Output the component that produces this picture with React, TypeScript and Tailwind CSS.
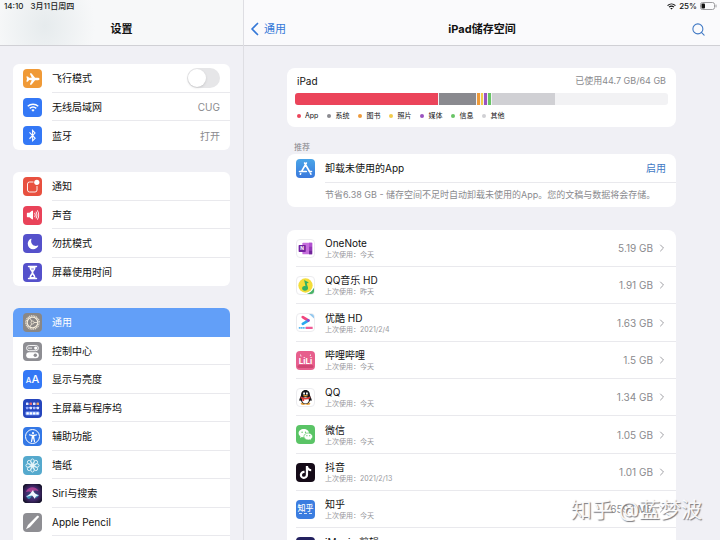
import React from 'react';
import { ChevronRight, Search } from 'lucide-react';
import { FaBluetoothB, FaTiktok } from 'react-icons/fa';
import { IoAccessibility, IoAirplane, IoMoon, IoVolumeHigh } from 'react-icons/io5';

const WifiGlyph = ({ className }: { className: string }) => (
  <svg viewBox="0 0 16 12" className={className} fill="none" stroke="currentColor" strokeWidth="1.900">
    <path d="M1 4.400C5 0.700 11 0.700 15 4.400" />
    <path d="M3.600 7.200C6.200 4.900 9.800 4.900 12.400 7.200" />
    <path d="M8 11.500L5.800 9.300C7 8.200 9 8.200 10.200 9.300Z" fill="currentColor" stroke="none" />
  </svg>
);

const NotificationGlyph = () => (
  <svg viewBox="0 0 19 19" className="size-full" fill="none">
    <path d="M10.500 5H6.500Q4.500 5 4.500 7V13Q4.500 15 6.500 15H12Q14 15 14 13V9" stroke="#fff" strokeWidth="0.9" />
    <circle cx="13.800" cy="5.300" r="2.600" fill="#fff" />
  </svg>
);

const HourglassGlyph = () => (
  <svg viewBox="0 0 19 19" className="size-full" fill="none">
    <path d="M5.500 3.500H13.500M5.500 15.500H13.500" stroke="#fff" strokeWidth="1.400" strokeLinecap="round" />
    <path d="M6.500 4C6.500 7.500 8.700 8 8.700 9.500S6.500 11.500 6.500 15H12.500C12.500 11.500 10.300 11 10.300 9.500S12.500 7.500 12.500 4Z" fill="#fff" />
    <path d="M8 14L9.500 11.600L11 14Z" fill="#5551cb" />
    <path d="M8.200 6H10.800" stroke="#5551cb" strokeWidth="0.8" />
  </svg>
);

const GearGlyph = () => (
  <svg viewBox="0 0 19 19" className="size-full" fill="none">
    <circle cx="9.500" cy="9.500" r="6.700" stroke="#f3ead9" strokeWidth="1.300" strokeDasharray="1.050 0.700" />
    <circle cx="9.500" cy="9.500" r="5.300" stroke="#f3ead9" strokeWidth="1.200" />
    <circle cx="9.500" cy="9.500" r="1.500" stroke="#f3ead9" strokeWidth="0.8" />
    <path d="M11 9.500H14.500M8.700 8.200L7 5.200M8.700 10.800L7 13.800" stroke="#f3ead9" strokeWidth="0.9" />
  </svg>
);

const ControlGlyph = () => (
  <svg viewBox="0 0 19 19" className="size-full" fill="none">
    <rect x="3.600" y="3.500" width="11.800" height="5.200" rx="2.600" stroke="#fff" strokeWidth="0.9" />
    <circle cx="12.700" cy="6.100" r="1.600" fill="#fff" />
    <path d="M5 6.100H9" stroke="#fff" strokeWidth="0.9" />
    <rect x="3.200" y="10.200" width="12.600" height="6" rx="3" fill="#fff" />
    <circle cx="12.300" cy="13.200" r="1.700" fill="#8e8e93" />
  </svg>
);

const HomeScreenGlyph = () => {
  const colors = ['#dfe6ff', '#e26b76', '#dfe6ff', '#e9a36b', '#8ea6ff', '#dfe6ff', '#a9bcff', '#dfe6ff'];
  return (
    <svg viewBox="0 0 19 19" className="size-full">
      {colors.map((c, i) => (
        <rect key={i} x={3 + (i % 4) * 3.500} y={3.500 + Math.floor(i / 4) * 4.200} width="2.500" height="2.500" rx="0.6" fill={c} />
      ))}
      <rect x="2.500" y="12.500" width="14" height="3.800" rx="1" fill="#7fa4ff" />
      {[0, 1, 2, 3].map((i) => (
        <rect key={i} x={3.400 + i * 3.300} y="13.200" width="2.400" height="2.400" rx="0.6" fill="#fff" />
      ))}
    </svg>
  );
};

const AccessibilityGlyph = () => (
  <span className="flex size-[15px] items-center justify-center rounded-full border border-white">
    <IoAccessibility className="size-[10px]" />
  </span>
);

const FlowerGlyph = () => (
  <svg viewBox="0 0 19 19" className="size-full" fill="none" stroke="#e8f6fb" strokeWidth="0.9">
    {[0, 45, 90, 135, 180, 225, 270, 315].map((a) => (
      <ellipse key={a} cx="9.500" cy="5.500" rx="1.800" ry="2.600" transform={`rotate(${a} 9.500 9.500)`} />
    ))}
    <circle cx="9.500" cy="9.500" r="1.500" fill="#e8f6fb" />
  </svg>
);

const SiriGlyph = () => (
  <svg viewBox="0 0 19 19" className="size-full">
    <defs>
      <radialGradient id="siri" cx="0.5" cy="0.5" r="0.6">
        <stop offset="0" stopColor="#35527f" />
        <stop offset="0.6" stopColor="#41286a" />
        <stop offset="1" stopColor="#15122a" />
      </radialGradient>
    </defs>
    <rect width="19" height="19" fill="url(#siri)" />
    <path d="M3 8C5 2 13 2 15.500 7C12 5.500 9 7 9.500 9.500C7 7 5 7 3 8Z" fill="#c0459b" opacity="0.8" />
    <path d="M3 12C5 16.500 8 16 9.500 9.500C11 14 14 15.500 16 11C14 10 11 9.500 9.500 9.500C7 9.500 5 11 3 12Z" fill="#3cb4d3" opacity="0.7" />
    <path d="M3 13Q7.500 10.500 10 6Q10.800 9.500 16 11.500Q12 11.700 12 15Q10 12 9 11.500Q7 11.600 3 13Z" fill="#f2f8ff" />
  </svg>
);

const PencilGlyph = () => (
  <svg viewBox="0 0 19 19" className="size-full">
    <path d="M14.200 2.800Q15.800 2.400 16 4L7 14L3 16.200L5 12Z" fill="#fff" />
  </svg>
);

const AppStoreGlyph = () => (
  <svg viewBox="0 0 19 19" className="size-full" fill="none" stroke="#fff" strokeWidth="1.600" strokeLinecap="round">
    <path d="M10.400 4L5.600 12.300M8.600 4L13.800 13M3.500 12.500H10.300M13.300 12.500H15.500M4.700 14.600L4.300 15.200M14.500 14.500L14.900 15.200" />
  </svg>
);

const OneNoteGlyph = () => (
  <svg viewBox="0 0 19 19" className="size-full">
    <rect x="6" y="3" width="11" height="13" rx="1" fill="#c66fdc" />
    <rect x="13.500" y="3" width="3.500" height="4.300" fill="#b04fd0" />
    <rect x="13.500" y="7.300" width="3.500" height="4.300" fill="#9436b8" />
    <rect x="13.500" y="11.600" width="3.500" height="4.400" fill="#70269a" />
    <rect x="1.800" y="5.500" width="8" height="8" rx="0.8" fill="#7422a0" />
    <text x="5.800" y="11.500" textAnchor="middle" fontSize="5.500" fontWeight="700" fill="#fff">N</text>
  </svg>
);

const QQMusicGlyph = () => (
  <svg viewBox="0 0 19 19" className="size-full">
    <circle cx="9.500" cy="9.500" r="8" fill="#f3dd3a" />
    <path d="M19 12V19H11Q16 17.500 19 12Z" fill="#48b268" />
    <path d="M7.800 2.500C8.500 5 12.500 4.200 13.200 7C12 6.500 11.300 6.800 10.900 7.500L12.400 12C12.800 16.300 5.500 16.500 5.700 12.700C5.800 10.400 8.200 9.700 9.500 10.400Z" fill="#31b064" />
  </svg>
);

const YoukuGlyph = () => (
  <svg viewBox="0 0 19 19" className="size-full" fill="none">
    <path d="M13.500 0H19V5Z" fill="#91c7ee" />
    <path d="M6.500 3.500L12.500 7.300" stroke="#f0467e" strokeWidth="3.200" strokeLinecap="round" />
    <path d="M6.500 11L12.500 7.300" stroke="#2aa9ef" strokeWidth="3" strokeLinecap="round" />
    <circle cx="12.500" cy="7.300" r="1.600" fill="#8a4fd0" />
    <path d="M2 15.500H9.500" stroke="#59b5ef" strokeWidth="2" strokeDasharray="1.800 0.400" />
    <path d="M9.800 15.500H17.500" stroke="#ef5b95" strokeWidth="2.400" />
  </svg>
);

const BilibiliGlyph = () => (
  <svg viewBox="0 0 19 19" className="size-full">
    <rect x="1.500" y="14" width="16" height="3" rx="1.500" fill="#cf4773" />
    <text x="9.500" y="12.500" textAnchor="middle" fontSize="8" fontWeight="700" fill="#fff">LiLi</text>
    <path d="M4.500 3.500L5 5.500M14.500 3.500L14.300 5" stroke="#fff" strokeWidth="0.8" />
  </svg>
);

const QQGlyph = () => (
  <svg viewBox="0 0 19 19" className="size-full">
    <ellipse cx="7" cy="16.500" rx="3" ry="1.300" fill="#e9a13a" />
    <ellipse cx="12" cy="16.500" rx="3" ry="1.300" fill="#e9a13a" />
    <path d="M9.500 1C6.200 1 4.500 3.700 4.500 7L2.700 11.500C2.300 13.700 3.500 13.700 4.300 12.500C5.100 15.800 7.200 16.700 9.500 16.700S13.900 15.800 14.700 12.500C15.500 13.700 16.700 13.700 16.300 11.500L14.500 7C14.500 3.700 12.800 1 9.500 1Z" fill="#17171a" />
    <ellipse cx="9.500" cy="12.600" rx="3.700" ry="3.500" fill="#fff" />
    <path d="M4.300 8.500Q9.500 11.500 14.700 8.500L14.900 10.200Q9.500 13.200 4.100 10.200Z" fill="#dd3a36" />
    <path d="M6 10.700H8V13.500H6Z" fill="#dd3a36" />
    <ellipse cx="7.900" cy="4.900" rx="1" ry="1.400" fill="#fff" />
    <ellipse cx="11.100" cy="4.900" rx="1" ry="1.400" fill="#fff" />
    <ellipse cx="9.500" cy="7.500" rx="2.700" ry="0.9" fill="#f0a833" />
  </svg>
);

const WeChatGlyph = () => (
  <svg viewBox="0 0 19 19" className="size-full">
    <path d="M7.800 4C4.800 4 2.600 5.900 2.600 8.200C2.600 9.600 3.400 10.700 4.500 11.400L4 13L5.900 12C6.500 12.200 7.200 12.300 7.800 12.300C10.800 12.300 13 10.500 13 8.200S10.800 4 7.800 4Z" fill="#fff" />
    <path d="M12.200 8C9.700 8 7.900 9.600 7.900 11.500S9.700 15 12.200 15C12.700 15 13.300 14.900 13.700 14.800L15.300 15.600L14.900 14.200C15.900 13.600 16.600 12.600 16.600 11.500C16.600 9.600 14.700 8 12.200 8Z" fill="#fff" stroke="#5ac466" strokeWidth="0.7" />
    <g fill="#5ac466">
      <circle cx="6.100" cy="7.200" r="0.7" />
      <circle cx="9.500" cy="7.200" r="0.7" />
      <circle cx="10.900" cy="10.700" r="0.6" />
      <circle cx="13.700" cy="10.700" r="0.6" />
    </g>
  </svg>
);

const ZhihuGlyph = () => (
  <span className="flex flex-col items-center">
    <span className="text-[8px] leading-[10px] font-medium">知乎</span>
    <span className="h-[2px] w-[13px] border-t border-dashed border-white/80" />
  </span>
);

const IMovieGlyph = () => (
  <svg viewBox="0 0 19 19" className="size-full">
    <path d="M9.500 3L11.500 7.500L16 8L12.500 11L13.500 16L9.500 13.500L5.500 16L6.500 11L3 8L7.500 7.500Z" fill="#c5c1ee" />
  </svg>
);

type IconProps = { className: string; children: React.ReactNode };

const Tile = ({ className, children }: IconProps) => (
  <span className={`flex size-[19px] shrink-0 items-center justify-center overflow-hidden rounded-[4px] text-white ${className}`}>
    {children}
  </span>
);

const sidebarGroups = [
  [
    { label: '飞行模式', toggle: true, bg: 'bg-[#f09a37]', icon: <IoAirplane className="size-[14px]" /> },
    { label: '无线局域网', value: 'CUG', bg: 'bg-[#3478f6]', icon: <WifiGlyph className="h-[9px] w-3" /> },
    { label: '蓝牙', value: '打开', bg: 'bg-[#3478f6]', icon: <FaBluetoothB className="size-[13px]" /> },
  ],
  [
    { label: '通知', bg: 'bg-[#e8503f]', icon: <NotificationGlyph /> },
    { label: '声音', bg: 'bg-[#e94359]', icon: <IoVolumeHigh className="size-[14px]" /> },
    { label: '勿扰模式', bg: 'bg-[#5551cb]', icon: <IoMoon className="size-[12px]" /> },
    { label: '屏幕使用时间', bg: 'bg-[#5551cb]', icon: <HourglassGlyph /> },
  ],
  [
    { label: '通用', active: true, bg: 'bg-[#8a8785]', icon: <GearGlyph /> },
    { label: '控制中心', bg: 'bg-[#8e8e93]', icon: <ControlGlyph /> },
    { label: '显示与亮度', bg: 'bg-[#3478f6]', icon: <span className="text-[8px] leading-none font-medium">A<span className="text-[11px]">A</span></span> },
    { label: '主屏幕与程序坞', bg: 'bg-[#2646bd]', icon: <HomeScreenGlyph /> },
    { label: '辅助功能', bg: 'bg-[#3478e6]', icon: <AccessibilityGlyph /> },
    { label: '墙纸', bg: 'bg-[#55a9cd]', icon: <FlowerGlyph /> },
    { label: 'Siri与搜索', bg: 'bg-[#1d1830]', icon: <SiriGlyph /> },
    { label: 'Apple Pencil', bg: 'bg-[#8e8e93]', icon: <PencilGlyph /> },
    { label: '触控 ID 与密码', bg: 'bg-[#e94359]', icon: null },
  ],
];

const segments = [
  { name: 'App', size: 144, color: 'bg-[#eb445a]' },
  { name: '系统', size: 37, color: 'bg-[#8a8a8f]' },
  { name: '图书', size: 3, color: 'bg-[#ee9a3a]' },
  { name: '照片', size: 3, color: 'bg-[#f3cb4b]' },
  { name: '媒体', size: 3, color: 'bg-[#9a52c0]' },
  { name: '信息', size: 3, color: 'bg-[#68c466]' },
  { name: '其他', size: 63, color: 'bg-[#d0d0d4]' },
];
const freeSize = 113;

const apps = [
  { name: 'OneNote', used: '今天', size: '5.19 GB', bg: 'border border-[#ececef] bg-white', icon: <OneNoteGlyph /> },
  { name: 'QQ音乐 HD', used: '昨天', size: '1.91 GB', bg: 'border border-[#ececef] bg-white', icon: <QQMusicGlyph /> },
  { name: '优酷 HD', used: '2021/2/4', size: '1.63 GB', bg: 'border border-[#ececef] bg-white', icon: <YoukuGlyph /> },
  { name: '哔哩哔哩', used: '今天', size: '1.5 GB', bg: 'bg-[#e75f8d]', icon: <BilibiliGlyph /> },
  { name: 'QQ', used: '今天', size: '1.34 GB', bg: 'border border-[#ececef] bg-white', icon: <QQGlyph /> },
  { name: '微信', used: '今天', size: '1.05 GB', bg: 'bg-[#5ac466]', icon: <WeChatGlyph /> },
  { name: '抖音', used: '2021/2/13', size: '1.01 GB', bg: 'bg-[#150b18]', icon: <FaTiktok className="size-[13px]" /> },
  { name: '知乎', used: '今天', size: '659.1 MB', bg: 'bg-[#3b7de0]', icon: <ZhihuGlyph /> },
  { name: 'iMovie 剪辑', used: '今天', size: '640 MB', bg: 'bg-[#23215f]', icon: <IMovieGlyph /> },
];

const Sidebar = () => (
  <aside className="flex w-[244px] shrink-0 flex-col overflow-hidden border-r border-[#dedee3]">
    <header className="h-[46px] shrink-0 border-b border-[#d0d0d5] bg-[radial-gradient(ellipse_50px_60px_at_45px_26px,#e6ebed,#f7f8f9)]">
      <div className="flex h-3 items-center gap-[7px] pl-1 text-[8px] font-medium text-[#222]">
        <span>14:10</span>
        <span>3月11日周四</span>
      </div>
      <h1 className="mt-2 text-center text-[11px] leading-[18px] font-bold">设置</h1>
    </header>
    <nav className="flex flex-col gap-[22px] px-[13px] pt-[18px]">
      {sidebarGroups.map((group, g) => (
        <ul key={g} className="overflow-hidden rounded-[6px] bg-white">
          {group.map((item) => (
            <li
              key={item.label}
              className={`group flex items-center gap-[10px] pl-[10px] odd:h-[29px] even:h-[28px] ${item.active ? 'bg-[#629ff8] text-white' : ''}`}
            >
              <Tile className={item.bg}>{item.icon}</Tile>
              <div className={`flex h-full flex-1 items-center justify-between border-b pr-[10px] group-last:border-b-0 ${item.active ? 'border-[#629ff8]' : 'border-[#e9e9ed]'}`}>
                {item.toggle ? (
                  <>
                    <label htmlFor="airplane">{item.label}</label>
                    <input
                      id="airplane"
                      type="checkbox"
                      role="switch"
                      className="h-5 w-[33px] appearance-none rounded-full bg-[#e6e6e8] p-px before:block before:size-[18px] before:rounded-full before:bg-white before:shadow-sm checked:bg-[#65c466] checked:before:ml-[13px]"
                    />
                  </>
                ) : (
                  <>
                    <a href="#">{item.label}</a>
                    {item.value && <span className="text-[#8a8a8e]">{item.value}</span>}
                  </>
                )}
              </div>
            </li>
          ))}
        </ul>
      ))}
    </nav>
  </aside>
);

const StorageCard = () => (
  <section className="rounded-[8px] bg-white px-2 pt-[6px] pb-[5px]">
    <div className="flex h-[14px] items-center justify-between px-[2px]">
      <h3>iPad</h3>
      <span className="text-[9px] text-[#8a8a8e]">已使用44.7 GB/64 GB</span>
    </div>
    <div className="mt-[5px] flex h-3 gap-px overflow-hidden rounded-[3px] bg-[#f2f2f4]">
      {segments.map((s) => (
        <span key={s.name} className={`basis-0 ${s.color}`} style={{ flexGrow: s.size }} />
      ))}
      <span className="basis-0" style={{ flexGrow: freeSize }} />
    </div>
    <ul className="mt-[5px] flex h-3 items-center gap-[9px] px-[2px] text-[7px]">
      {segments.map((s) => (
        <li key={s.name} className="flex items-center gap-1">
          <span className={`size-1 rounded-full ${s.color}`} />
          {s.name}
        </li>
      ))}
    </ul>
  </section>
);

const App = () => {
  return (
    <div
      lang="zh-CN"
      className="relative flex h-screen overflow-hidden bg-[#f0f0f5] font-['Inter','Noto_Sans_CJK_SC',sans-serif] text-[10px] leading-[14px] text-[#111]"
    >
      <Sidebar />
      <main className="flex min-w-0 flex-1 flex-col overflow-hidden">
        <header className="h-[46px] shrink-0 border-b border-[#d0d0d5] bg-[#fafafc]">
          <div className="flex h-3 items-center justify-end gap-[3px] pr-[3px] text-[8px] font-medium">
            <WifiGlyph className="h-[7px] w-[9px]" />
            <span>25%</span>
            <svg viewBox="0 0 17 8" className="h-2 w-[17px]" fill="none">
              <rect x="0.500" y="0.500" width="14" height="7" rx="2" stroke="#9c9ca0" />
              <rect x="1.500" y="1.500" width="3.500" height="5" rx="1" fill="#111" />
              <path d="M16 3V5" stroke="#9c9ca0" strokeLinecap="round" />
            </svg>
          </div>
          <div className="mt-2 grid grid-cols-3 items-center px-[6px] text-[11px] leading-[18px]">
            <button className="flex items-center gap-[5px] text-[#3478d8]">
              <svg viewBox="0 0 9 14" className="h-[14px] w-[9px]" fill="none">
                <path d="M7.500 1.500L2 7L7.500 12.500" stroke="currentColor" strokeWidth="1.700" strokeLinecap="round" strokeLinejoin="round" />
              </svg>
              通用
            </button>
            <h2 className="text-center font-bold">iPad储存空间</h2>
            <button aria-label="搜索" className="mr-2 justify-self-end text-[#3f78c4]">
              <Search className="size-[15px]" strokeWidth={1.7} />
            </button>
          </div>
        </header>

        <div className="flex flex-col pt-[22px] pr-[44px] pl-[43px]">
          <StorageCard />
          <h3 className="mt-[13px] h-[14px] pl-[7px] text-[8px] text-[#85858a]">推荐</h3>
          <section className="rounded-[8px] bg-white pl-[9px]">
            <div className="flex items-center gap-[10px]">
              <Tile className="bg-linear-to-b from-[#4aa5e8] to-[#3a78dc]">
                <AppStoreGlyph />
              </Tile>
              <div className="flex h-[29px] flex-1 items-center justify-between border-b border-[#e9e9ed] pr-[10px]">
                <h3>卸载未使用的App</h3>
                <button className="text-[#3f78c4]">启用</button>
              </div>
            </div>
            <p className="py-[5px] pl-[29px] text-[9px] text-[#8a8a8e]">
              节省6.38 GB - 储存空间不足时自动卸载未使用的App。您的文稿与数据将会存储。
            </p>
          </section>

          <ul className="mt-[23px] rounded-t-[8px] bg-white pl-[9px]">
            {apps.map((app) => (
              <li key={app.name} className="h-[37px] border-b border-[#e9e9ed] nth-[3n]:h-[38px]">
                <a href="#" className="flex h-full items-center gap-[10px] pr-[8px]">
                  <Tile className={app.bg}>{app.icon}</Tile>
                  <span className="flex flex-1 flex-col">
                    <span className="leading-[13px]">{app.name}</span>
                    <span className="text-[7px] leading-[9px] text-[#97979c]">上次使用：{app.used}</span>
                  </span>
                  <span className="text-[#8a8a8e]">{app.size}</span>
                  <ChevronRight className="-ml-[7px] size-3 text-[#a0a0a5]" />
                </a>
              </li>
            ))}
          </ul>
        </div>
      </main>
      <div className="pointer-events-none absolute right-[18px] bottom-[17px] text-[21px] leading-[26px] text-white/90 [text-shadow:1px_1px_1px_#77777c]">
        知乎 @蓝梦波
      </div>
    </div>
  );
};

export default App;
